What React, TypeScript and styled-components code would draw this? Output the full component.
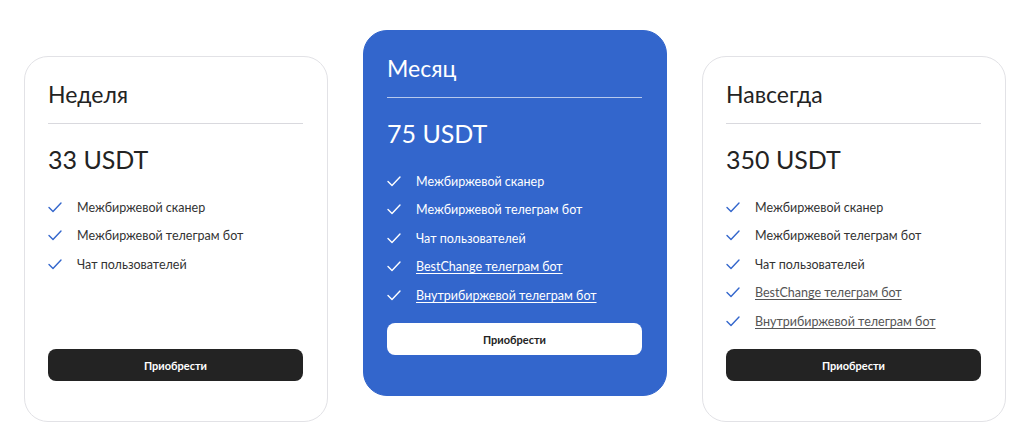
import styled, { createGlobalStyle } from 'styled-components';

const GlobalStyle = createGlobalStyle`
  html, body {
    margin: 0;
    padding: 0;
    background: #ffffff;
  }
  body {
    font-family: Lato, 'Open Sans', sans-serif;
    -webkit-font-smoothing: antialiased;
  }
`;

const Plans = styled.div`
  display: flex;
  align-items: flex-start;
  gap: 35px;
  padding: 30px 18px 0 24px;
  height: 422px;
  box-sizing: border-box;
  overflow: hidden;
`;

const Card = styled.div<{ $featured?: boolean }>`
  width: 304px;
  height: 366px;
  box-sizing: border-box;
  flex-shrink: 0;
  margin-top: ${(p) => (p.$featured ? '0' : '26px')};
  padding: 23px 24px 40px 23px;
  border-radius: 24px;
  display: flex;
  flex-direction: column;
  background: ${(p) => (p.$featured ? '#3366cc' : '#ffffff')};
  border: 1px solid ${(p) => (p.$featured ? '#3366cc' : '#e2e2e6')};
  color: ${(p) => (p.$featured ? '#ffffff' : '#232323')};
`;

const Title = styled.h3`
  margin: 0;
  font-size: 23px;
  line-height: 28px;
  font-weight: 400;
`;

const Divider = styled.hr<{ $featured?: boolean }>`
  margin: 15px 0 0 0;
  border: 0;
  height: 1px;
  background: ${(p) => (p.$featured ? 'rgba(255,255,255,0.65)' : '#d9d9de')};
`;

const Price = styled.div`
  margin-top: 20px;
  font-size: 25px;
  line-height: 30px;
  font-weight: 400;
`;

const Features = styled.ul`
  list-style: none;
  margin: 23px 0 0 0;
  padding: 0;
  display: flex;
  flex-direction: column;
  gap: 8.6px;
`;

const Feature = styled.li`
  display: flex;
  align-items: center;
  gap: 15px;
  height: 20px;
  font-size: 12.5px;
`;

const FeatureText = styled.span<{ $featured?: boolean }>`
  color: ${(p) => (p.$featured ? '#ffffff' : '#333333')};
`;

const FeatureLink = styled.a<{ $featured?: boolean }>`
  color: ${(p) => (p.$featured ? '#ffffff' : '#555555')};
  text-decoration: underline;
  text-underline-offset: 2px;
`;

const BuyButton = styled.button<{ $featured?: boolean }>`
  margin-top: auto;
  height: 32px;
  width: 100%;
  border: 0;
  border-radius: 8px;
  font-family: inherit;
  font-size: 11px;
  font-weight: 700;
  cursor: pointer;
  background: ${(p) => (p.$featured ? '#ffffff' : '#232323')};
  color: ${(p) => (p.$featured ? '#232323' : '#ffffff')};
`;

const Check = ({ color }: { color: string }) => (
  <svg width="14" height="11" viewBox="0 0 14 11" fill="none" style={{ flexShrink: 0 }}>
    <polyline points="1,5.5 5,9.5 13,1" stroke={color} strokeWidth="1.4" strokeLinecap="round" strokeLinejoin="round" />
  </svg>
);

type Item = { text: string; link?: boolean };

const base: Item[] = [
  { text: 'Межбиржевой сканер' },
  { text: 'Межбиржевой телеграм бот' },
  { text: 'Чат пользователей' },
];

const extra: Item[] = [
  { text: 'BestChange телеграм бот', link: true },
  { text: 'Внутрибиржевой телеграм бот', link: true },
];

const plans = [
  { name: 'Неделя', price: '33 USDT', items: base, featured: false },
  { name: 'Месяц', price: '75 USDT', items: [...base, ...extra], featured: true },
  { name: 'Навсегда', price: '350 USDT', items: [...base, ...extra], featured: false },
];

export default function App() {
  return (
    <>
      <GlobalStyle />
      <Plans>
        {plans.map((plan) => (
          <Card key={plan.name} $featured={plan.featured}>
            <Title>{plan.name}</Title>
            <Divider $featured={plan.featured} />
            <Price>{plan.price}</Price>
            <Features>
              {plan.items.map((item) => (
                <Feature key={item.text}>
                  <Check color={plan.featured ? '#ffffff' : '#3366cc'} />
                  {item.link ? (
                    <FeatureLink href="#" $featured={plan.featured}>
                      {item.text}
                    </FeatureLink>
                  ) : (
                    <FeatureText $featured={plan.featured}>{item.text}</FeatureText>
                  )}
                </Feature>
              ))}
            </Features>
            <BuyButton $featured={plan.featured}>Приобрести</BuyButton>
          </Card>
        ))}
      </Plans>
    </>
  );
}
